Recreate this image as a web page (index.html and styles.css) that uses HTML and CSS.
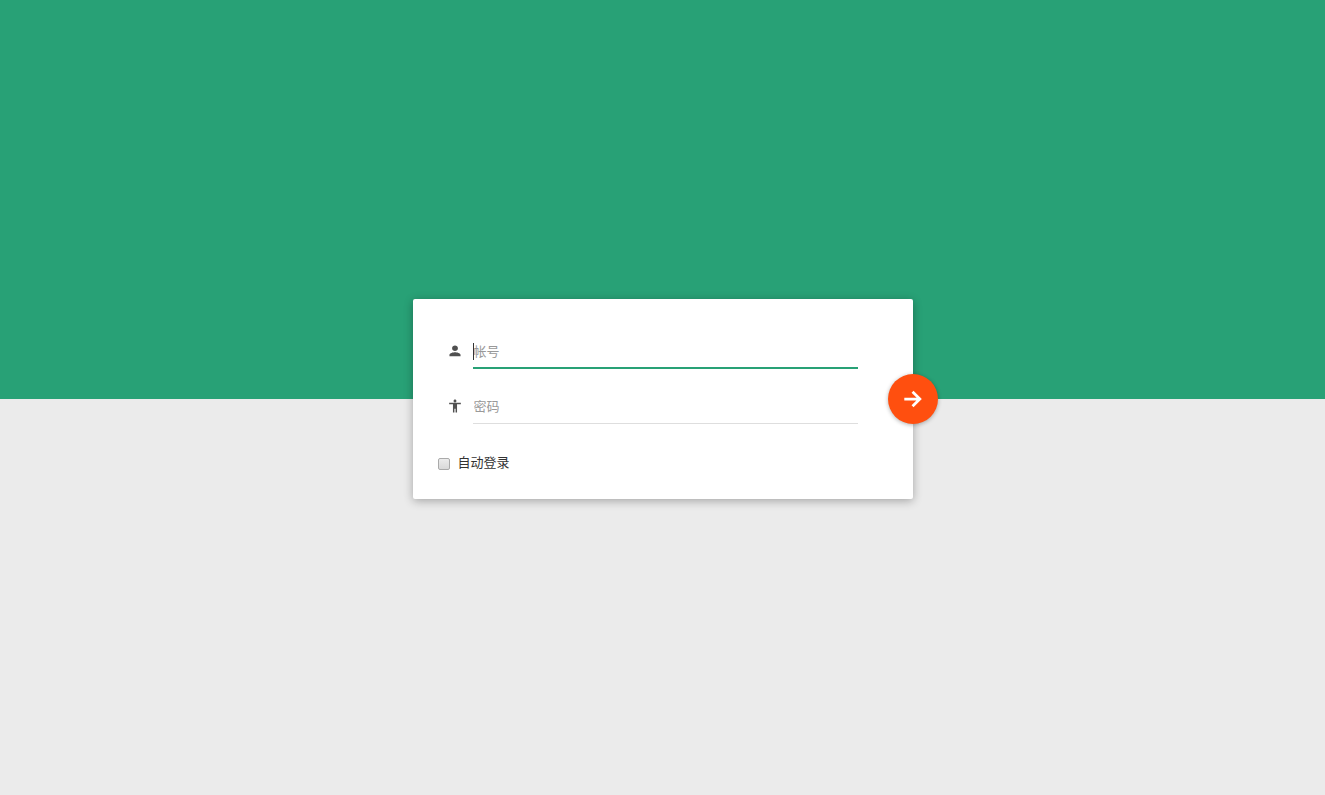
FILE: index.html
```html
<!DOCTYPE html>
<html lang="zh-CN">
<head>
<meta charset="utf-8">
<meta name="viewport" content="width=device-width, initial-scale=1">
<title>登录</title>
<link rel="stylesheet" href="styles.css">
</head>
<body>
<main class="page">
  <form class="card">
    <div class="field">
      <label class="field-icon" for="account" aria-label="帐号">
        <svg viewBox="0 0 24 24" aria-hidden="true"><path d="M12 12c2.700 0 5-2 5-4.800S14.700 2.500 12 2.500 7 4.400 7 7.200 9.300 12 12 12zM12 14c-3 0-9.500 1.500-9.500 4.500V21h19v-2.500c0-3-6.500-4.500-9.500-4.500z"/></svg>
      </label>
      <div class="line line-active"><input class="input" id="account" type="text" placeholder="帐号"></div>
    </div>
    <div class="field">
      <label class="field-icon" for="password" aria-label="密码">
        <svg viewBox="0 0 24 24" aria-hidden="true"><path d="M12 1c1.400 0 2.500 1.100 2.500 2.500S13.400 6 12 6 9.500 4.900 9.500 3.500 10.600 1 12 1zM22 9h-6.500v14H13v-6.500h-2V23H8.500V9H2V6.500h20z"/></svg>
      </label>
      <div class="line"><input class="input" id="password" type="password" placeholder="密码"></div>
    </div>
    <label class="remember"><input class="check" type="checkbox">自动登录</label>
    <button class="submit" type="submit" aria-label="登录">
      <svg viewBox="0 0 24 24" aria-hidden="true"><path d="M2.500 12h17M11.500 4l8 8-8 8"/></svg>
    </button>
  </form>
</main>
</body>
</html>
```
FILE: styles.css
```css
* {
  box-sizing: border-box;
}

body {
  margin: 0;
  color: #333;
  font: 13px/18px "Liberation Sans", "Noto Sans CJK SC", sans-serif;
}

.page {
  display: grid;
  place-items: center;
  min-height: 100vh;
  padding: 3px 0 0;
  background: linear-gradient(#28a176 0 399px, #ebebeb 399px);
}

.card {
  position: relative;
  display: flex;
  flex-direction: column;
  gap: 20px;
  width: 100%;
  max-width: 500px;
  min-height: 200px;
  padding: 35px 55px 25px 25px;
  border-radius: 2px;
  background: #fff;
  box-shadow: 0 2px 10px rgba(0, 0, 0, 0.3);
}

.field {
  display: flex;
  height: 35px;
}

.field-icon {
  display: grid;
  place-items: center;
  flex: none;
  width: 35px;
  padding-bottom: 2px;
}

.field-icon svg {
  width: 14px;
  height: 14px;
  fill: #505050;
}

.line {
  position: relative;
  flex: 1;
  border-bottom: 1px solid #dedede;
}

.line-active {
  border-bottom: 2px solid #28a176;
}

.line-active::before {
  content: "";
  position: absolute;
  top: 9px;
  left: 0;
  width: 1px;
  height: 17px;
  background: #333;
}

.input {
  display: block;
  width: 100%;
  height: 100%;
  padding: 1px 0 0 1px;
  border: 0;
  outline: 0;
  background: transparent;
  color: inherit;
  font: inherit;
}

.input::placeholder {
  color: #999;
  opacity: 1;
}

.remember {
  display: flex;
  align-items: center;
  align-self: flex-start;
  gap: 8px;
  margin-top: 10px;
}

.check {
  appearance: none;
  width: 12px;
  height: 12px;
  margin: 1px 0 0;
  border: 1px solid #aaa;
  border-radius: 2px;
  background: linear-gradient(#ececec, #d9d9d9);
}

.check:checked {
  background: #28a176;
}

.submit {
  position: absolute;
  top: 50%;
  right: -25px;
  display: grid;
  place-items: center;
  width: 50px;
  height: 50px;
  padding: 0;
  border: 0;
  border-radius: 50%;
  background: #ff4f0f;
  box-shadow: 0 1px 4px rgba(0, 0, 0, 0.3);
  transform: translateY(-50%);
  cursor: pointer;
}

.submit svg {
  width: 22px;
  height: 22px;
  fill: none;
  stroke: #fff;
  stroke-width: 3;
}
```
